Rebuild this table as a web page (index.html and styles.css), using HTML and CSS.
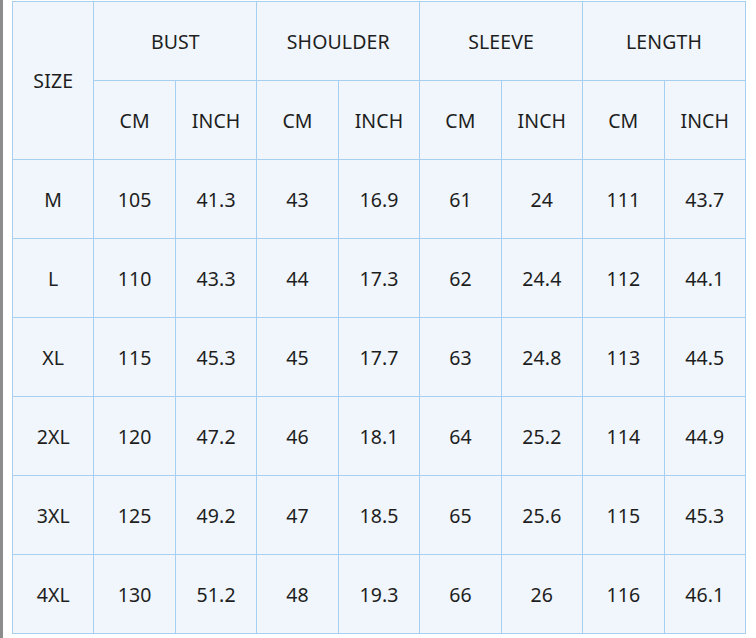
FILE: index.html
```html
<!DOCTYPE html>
<html>
<head>
<meta charset="utf-8">
<link rel="stylesheet" href="styles.css">
</head>
<body>
<div class="page">
<table class="size-table">
<colgroup>
<col class="c"><col class="c"><col class="c"><col class="c"><col class="c"><col class="c"><col class="c"><col class="c"><col class="c">
</colgroup>
<thead>
<tr><th rowspan="2">SIZE</th><th colspan="2">BUST</th><th colspan="2">SHOULDER</th><th colspan="2">SLEEVE</th><th colspan="2">LENGTH</th></tr>
<tr><th>CM</th><th>INCH</th><th>CM</th><th>INCH</th><th>CM</th><th>INCH</th><th>CM</th><th>INCH</th></tr>
</thead>
<tbody>
<tr><td>M</td><td>105</td><td>41.3</td><td>43</td><td>16.9</td><td>61</td><td>24</td><td>111</td><td>43.7</td></tr>
<tr><td>L</td><td>110</td><td>43.3</td><td>44</td><td>17.3</td><td>62</td><td>24.4</td><td>112</td><td>44.1</td></tr>
<tr><td>XL</td><td>115</td><td>45.3</td><td>45</td><td>17.7</td><td>63</td><td>24.8</td><td>113</td><td>44.5</td></tr>
<tr><td>2XL</td><td>120</td><td>47.2</td><td>46</td><td>18.1</td><td>64</td><td>25.2</td><td>114</td><td>44.9</td></tr>
<tr><td>3XL</td><td>125</td><td>49.2</td><td>47</td><td>18.5</td><td>65</td><td>25.6</td><td>115</td><td>45.3</td></tr>
<tr><td>4XL</td><td>130</td><td>51.2</td><td>48</td><td>19.3</td><td>66</td><td>26</td><td>116</td><td>46.1</td></tr>
</tbody>
</table>
</div>
</body>
</html>
```
FILE: styles.css
```css
html, body {
  margin: 0;
  padding: 0;
  background: #ffffff;
}
.page {
  border-left: 3px solid #8c8c8c;
  padding: 1px 0 0 9px;
  min-height: 637px;
}
.size-table {
  border-collapse: collapse;
  table-layout: fixed;
  width: 734px;
  background: #f0f6fb;
  font-family: "Noto Sans", "Open Sans", sans-serif;
  font-size: 19.5px;
  letter-spacing: 0.1px;
  color: #1e1e1e;
}
.size-table th,
.size-table td {
  border: 1px solid #a6cff0;
  text-align: center;
  vertical-align: middle;
  font-weight: 400;
  height: 78px;
  padding: 0;
}
```
